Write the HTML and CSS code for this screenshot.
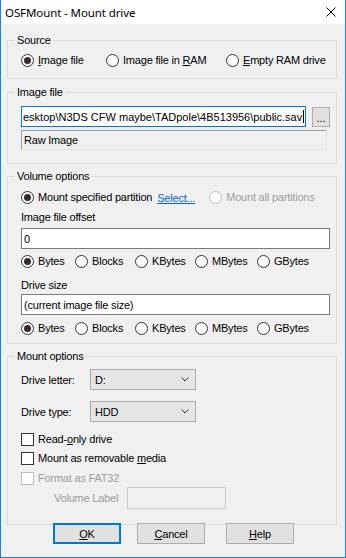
FILE: index.html
```html
<!DOCTYPE html>
<html lang="en">
<head>
  <meta charset="UTF-8">
  <title>OSFMount - Mount drive</title>
  <link rel="stylesheet" href="styles.css">
</head>
<body>
  <div class="window">
    <div class="titlebar">
      <span class="title">OSFMount - Mount drive</span>
      <svg class="close" width="10" height="10" viewBox="0 0 10 10">
        <path d="M0.5 0.5 L9.5 9.5 M9.5 0.5 L0.5 9.5" stroke="#000" stroke-width="1" fill="none"/>
      </svg>
    </div>

    <div class="client">
      <fieldset class="group group-source">
        <legend>Source</legend>
        <div class="row">
          <div class="opt w-85"><span class="radio on"></span><span><u>I</u>mage file</span></div>
          <div class="opt w-120"><span class="radio"></span><span>Image file in <u>R</u>AM</span></div>
          <div class="opt"><span class="radio"></span><span><u>E</u>mpty RAM drive</span></div>
        </div>
      </fieldset>

      <fieldset class="group group-image">
        <legend>Image file</legend>
        <div class="file-row">
          <div class="edit focused path">
            <span class="path-text">esktop\N3DS CFW maybe\TADpole\4B513956\public.sav</span><span class="caret"></span>
          </div>
          <button class="btn-small">...</button>
        </div>
        <div class="static">Raw Image</div>
      </fieldset>

      <fieldset class="group group-volume">
        <legend>Volume options</legend>
        <div class="row">
          <div class="opt"><span class="radio on"></span><span>Mount specified partition</span></div>
          <a class="link" href="#">Select...</a>
          <div class="opt disabled"><span class="radio"></span><span>Mount all partitions</span></div>
        </div>
        <div class="field-label offset-label">Image file offset</div>
        <div class="edit offset-edit">0</div>
        <div class="row units units-1">
          <div class="opt u-bytes"><span class="radio on"></span><span>Bytes</span></div>
          <div class="opt u-blocks"><span class="radio"></span><span>Blocks</span></div>
          <div class="opt u-kb"><span class="radio"></span><span>KBytes</span></div>
          <div class="opt u-mb"><span class="radio"></span><span>MBytes</span></div>
          <div class="opt"><span class="radio"></span><span>GBytes</span></div>
        </div>
        <div class="field-label size-label">Drive size</div>
        <div class="edit size-edit">(current image file size)</div>
        <div class="row units units-2">
          <div class="opt u-bytes"><span class="radio on"></span><span>Bytes</span></div>
          <div class="opt u-blocks"><span class="radio"></span><span>Blocks</span></div>
          <div class="opt u-kb"><span class="radio"></span><span>KBytes</span></div>
          <div class="opt u-mb"><span class="radio"></span><span>MBytes</span></div>
          <div class="opt"><span class="radio"></span><span>GBytes</span></div>
        </div>
      </fieldset>

      <fieldset class="group group-mount">
        <legend>Mount options</legend>
        <div class="combo-row">
          <span class="combo-label">Drive letter:</span>
          <div class="combo">
            <span>D:</span>
            <svg width="8" height="5" viewBox="0 0 8 5"><path d="M0.5 0.5 L4 4 L7.5 0.5" stroke="#333" fill="none"/></svg>
          </div>
        </div>
        <div class="combo-row second">
          <span class="combo-label">Drive type:</span>
          <div class="combo">
            <span>HDD</span>
            <svg width="8" height="5" viewBox="0 0 8 5"><path d="M0.5 0.5 L4 4 L7.5 0.5" stroke="#333" fill="none"/></svg>
          </div>
        </div>
        <div class="opt check-1"><span class="check"></span><span>Read-<u>o</u>nly drive</span></div>
        <div class="opt check-2"><span class="check"></span><span>Mount as removable <u>m</u>edia</span></div>
        <div class="opt check-3 disabled"><span class="check"></span><span>Format as FAT32</span></div>
        <div class="label-row">
          <span class="vol-label">Volume Label</span>
          <div class="edit-disabled"></div>
        </div>
      </fieldset>

      <div class="buttons">
        <button class="btn default"><u>O</u>K</button>
        <button class="btn cancel"><u>C</u>ancel</button>
        <button class="btn help"><u>H</u>elp</button>
      </div>
    </div>
  </div>
</body>
</html>
```

FILE: styles.css
```css
body {
  margin: 0;
  background: #fff;
  font-family: "Liberation Sans", Arial, sans-serif;
  font-size: 11px;
  letter-spacing: -0.2px;
  color: #000;
}
.window {
  width: 346px;
  height: 558px;
  box-sizing: border-box;
  border: 1px solid #1883d7;
  border-top: none;
  background: #f0f0f0;
}
.titlebar {
  height: 24px;
  background: #fff;
  display: flex;
  align-items: center;
  justify-content: space-between;
  padding: 0 9px 0 4px;
}
.title {
  font-family: "Noto Sans", sans-serif;
  font-size: 11.5px;
  letter-spacing: -0.1px;
}
.client {
  padding: 10px 8px 0 6px;
}

/* group boxes */
.group {
  margin: 0;
  border: 1px solid #dcdcdc;
  padding: 7px 6px 11px 13px;
  min-width: 0;
}
.group legend {
  padding: 0 2px;
  margin-left: -6px;
  height: 13px;
  line-height: 13px;
}
.group-image {
  margin-top: 7px;
  padding-bottom: 13px;
}
.group-volume {
  margin-top: 6px;
  padding-top: 8px;
  padding-bottom: 8px;
}
.group-mount {
  margin-top: 6px;
  padding-top: 6px;
  padding-bottom: 15px;
}

/* radios and checks */
.row {
  display: flex;
  align-items: center;
  height: 13px;
}
.opt {
  display: flex;
  align-items: center;
  height: 13px;
  line-height: 13px;
  white-space: nowrap;
}
.w-85 { width: 85px; }
.w-120 { width: 120px; }
.radio {
  width: 13px;
  height: 13px;
  box-sizing: border-box;
  border: 1px solid #333;
  border-radius: 50%;
  background: #fff;
  display: flex;
  align-items: center;
  justify-content: center;
  margin-right: 4px;
  flex: none;
}
.radio.on::after {
  content: "";
  width: 7px;
  height: 7px;
  border-radius: 50%;
  background: #3a2a2e;
}
.check {
  width: 13px;
  height: 13px;
  box-sizing: border-box;
  border: 1px solid #333;
  background: #fff;
  margin-right: 4px;
  flex: none;
}
.disabled {
  color: #9d9d9d;
}
.disabled .radio,
.disabled .check {
  border-color: #bcbcbc;
}
.link {
  color: #0066cc;
  margin-left: 5px;
  margin-right: 14px;
}

/* edits */
.edit {
  height: 21px;
  box-sizing: border-box;
  border: 1px solid #7a7a7a;
  background: #fff;
  padding: 0 2px;
  display: flex;
  align-items: center;
  white-space: nowrap;
}
.edit.focused {
  border-color: #0078d7;
}
.file-row {
  display: flex;
  align-items: flex-start;
}
.path {
  width: 285px;
  overflow: hidden;
  padding-left: 1px;
}
.path-text {
  flex: none;
  letter-spacing: 0;
}
.caret {
  flex: none;
  width: 1px;
  height: 13px;
  background: #000;
  margin-left: 1px;
}
.btn-small {
  width: 18px;
  height: 20px;
  margin: 1px 0 0 6px;
  padding: 0;
  border: 1px solid #adadad;
  background: #e1e1e1;
  font: inherit;
  line-height: 20px;
}
.static {
  width: 306px;
  height: 20px;
  box-sizing: border-box;
  margin-top: 3px;
  padding-left: 2px;
  border: 1px solid #e3e3e3;
  border-top-color: #a0a0a0;
  border-left-color: #a0a0a0;
  line-height: 18px;
}

.field-label {
  height: 13px;
  line-height: 13px;
}
.offset-label { margin-top: 7px; }
.offset-edit { margin-top: 4px; }
.units-1 { margin-top: 6px; }
.size-label { margin-top: 11px; }
.size-edit { margin-top: 2px; }
.units-2 { margin-top: 7px; }
.u-bytes { width: 54px; }
.u-blocks { width: 60px; }
.u-kb { width: 60px; }
.u-mb { width: 62px; }

/* combos */
.combo-row {
  display: flex;
  align-items: center;
}
.combo-row.second {
  margin-top: 11px;
}
.combo-label {
  width: 69px;
}
.combo {
  width: 106px;
  height: 21px;
  box-sizing: border-box;
  border: 1px solid #acacac;
  background: #e5e5e5;
  padding: 0 6px 0 4px;
  display: flex;
  align-items: center;
  justify-content: space-between;
}
.check-1 { margin-top: 11px; }
.check-2 { margin-top: 6px; }
.check-3 { margin-top: 7px; }
.label-row {
  display: flex;
  align-items: center;
  margin-top: 2px;
  padding-left: 33px;
}
.vol-label {
  width: 73px;
  color: #9d9d9d;
}
.edit-disabled {
  width: 99px;
  height: 22px;
  box-sizing: border-box;
  border: 1px solid #cccccc;
  background: #f0f0f0;
}

/* dialog buttons */
.buttons {
  display: flex;
  margin-top: -2px;
  padding-left: 46px;
  position: relative;
}
.btn {
  width: 68px;
  height: 21px;
  box-sizing: border-box;
  border: 1px solid #adadad;
  background: #e1e1e1;
  font: inherit;
  letter-spacing: inherit;
  color: #000;
  padding: 0;
}
.btn.default {
  border: 2px solid #0078d7;
}
.btn.cancel { margin-left: 16px; }
.btn.help { margin-left: 21px; }
```
